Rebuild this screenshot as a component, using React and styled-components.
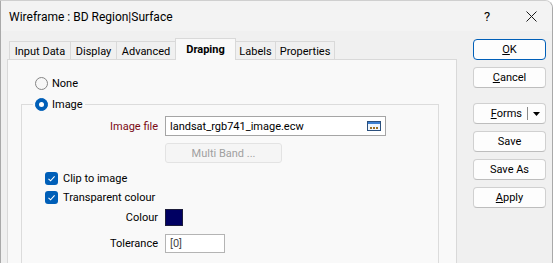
import React from 'react';
import styled, { createGlobalStyle } from 'styled-components';

const GlobalStyle = createGlobalStyle`
  html, body {
    margin: 0;
    padding: 0;
    background: #ffffff;
  }
  body {
    font-family: Roboto, "Liberation Sans", sans-serif;
    font-size: 11px;
    color: #000;
    overflow: hidden;
  }
`;

const Window = styled.div`
  width: 553px;
  height: 263px;
  box-sizing: border-box;
  border-left: 1px solid #a9a9a9;
  border-right: 1px solid #a9a9a9;
  border-top: 1px solid #cfcfcf;
  border-top-right-radius: 8px;
  background: #f0f0f0;
  overflow: hidden;
  display: flex;
  flex-direction: column;
`;

const TitleBar = styled.div`
  height: 30px;
  flex: none;
  display: flex;
  align-items: center;
  background: #f3f3f3;
`;

const TitleText = styled.div`
  flex: 1;
  padding-left: 8px;
  font-size: 12px;
  padding-top: 2px;
`;

const CaptionButton = styled.div`
  width: ${(p) => p.w}px;
  height: 30px;
  display: flex;
  align-items: center;
  justify-content: center;
  font-size: 13px;
`;

const Body = styled.div`
  flex: 1;
  display: flex;
  gap: 16px;
  padding: 7px 0 0 6px;
  min-height: 0;
`;

const LeftColumn = styled.div`
  width: 450px;
  display: flex;
  flex-direction: column;
`;

const TabRow = styled.div`
  height: 21px;
  display: flex;
  align-items: flex-end;
  padding-left: 2px;
  position: relative;
  z-index: 1;
`;

const Tab = styled.div`
  width: ${(p) => p.w}px;
  height: ${(p) => (p.active ? 22 : 18)}px;
  margin-bottom: ${(p) => (p.active ? -1 : 0)}px;
  margin-left: -1px;
  box-sizing: border-box;
  border: 1px solid #d9d9d9;
  border-bottom: none;
  background: ${(p) => (p.active ? '#f9f9f9' : '#f0f0f0')};
  font-weight: ${(p) => (p.active ? 700 : 400)};
  display: flex;
  align-items: center;
  justify-content: center;
  padding-top: ${(p) => (p.active ? 0 : 1)}px;
  &:first-child {
    margin-left: 0;
  }
`;

const Panel = styled.div`
  flex: 1;
  box-sizing: border-box;
  border: 1px solid #d9d9d9;
  border-bottom: none;
  background: #f9f9f9;
  padding-top: 16px;
`;

const RadioRow = styled.label`
  display: flex;
  align-items: center;
  gap: 4px;
  height: 14px;
  margin-left: ${(p) => p.indent || 0}px;
`;

const RadioCircle = styled.span`
  width: 13px;
  height: 13px;
  box-sizing: border-box;
  border-radius: 50%;
  border: 1px solid ${(p) => (p.checked ? '#005fb8' : '#858585')};
  background: ${(p) => (p.checked ? '#005fb8' : '#f7f7f7')};
  display: flex;
  align-items: center;
  justify-content: center;
  &::after {
    content: '';
    width: 5px;
    height: 5px;
    border-radius: 50%;
    background: #ffffff;
    display: ${(p) => (p.checked ? 'block' : 'none')};
  }
`;

const Group = styled.fieldset`
  margin: 7px 17px 0 13px;
  padding: 0 0 40px 0;
  border: 1px solid #dcdcdc;
  min-width: 0;
`;

const Legend = styled.legend`
  margin-left: 11px;
  padding: 0 2px;
`;

const FieldRow = styled.div`
  display: grid;
  grid-template-columns: 136px auto;
  column-gap: 7px;
  align-items: center;
  margin-top: ${(p) => p.top}px;
`;

const FieldLabel = styled.span`
  text-align: right;
  color: ${(p) => p.color || '#000'};
`;

const TextBox = styled.div`
  width: ${(p) => p.w}px;
  height: ${(p) => p.h || 20}px;
  box-sizing: border-box;
  border: 1px solid ${(p) => p.border || '#a5a5a5'};
  background: #ffffff;
  display: flex;
  align-items: center;
  justify-content: space-between;
  padding: 0 4px 0 4px;
  color: ${(p) => p.textColor || '#000'};
`;

const DisabledButton = styled.div`
  width: 117px;
  height: 20px;
  box-sizing: border-box;
  border: 1px solid #e3e3e3;
  border-radius: 3px;
  background: #f5f5f5;
  color: #a0a0a0;
  display: flex;
  align-items: center;
  justify-content: center;
`;

const CheckRow = styled.label`
  display: flex;
  align-items: center;
  gap: 5px;
  height: 19px;
  padding-left: 23px;
  margin-top: ${(p) => p.top || 0}px;
`;

const CheckBox = styled.span`
  width: 13px;
  height: 13px;
  border-radius: 3px;
  background: #005fb8;
  display: flex;
  align-items: center;
  justify-content: center;
`;

const Swatch = styled.div`
  width: 18px;
  height: 17px;
  box-sizing: border-box;
  border: 1px solid #1c1c3a;
  background: ${(p) => p.color};
`;

const ButtonColumn = styled.div`
  width: 73px;
  display: flex;
  flex-direction: column;
  gap: 7px;
  padding-top: 1px;
`;

const Button = styled.div`
  height: 21px;
  box-sizing: border-box;
  border: 1px solid ${(p) => (p.primary ? '#005fb8' : '#d0d0d0')};
  border-bottom-color: ${(p) => (p.primary ? '#005fb8' : '#bdbdbd')};
  border-radius: 4px;
  background: #fdfdfd;
  display: flex;
  align-items: center;
  justify-content: center;
  margin-top: ${(p) => p.top || 0}px;
`;

const SplitButton = styled(Button)`
  justify-content: flex-start;
`;

const SplitMain = styled.span`
  flex: 1;
  text-align: right;
  padding-right: 5px;
`;

const SplitDivider = styled.span`
  width: 1px;
  height: 13px;
  background: #8a8a8a;
`;

const SplitArrow = styled.span`
  width: 17px;
  display: flex;
  align-items: center;
  justify-content: center;
`;

const CloseIcon = () => (
  <svg width="11" height="11" viewBox="0 0 11 11">
    <path d="M0.5 0.5 L10.5 10.5 M10.5 0.5 L0.5 10.5" stroke="#1a1a1a" strokeWidth="1" />
  </svg>
);

const BrowseIcon = () => (
  <svg width="14" height="10" viewBox="0 0 14 10">
    <rect x="0.5" y="0.5" width="13" height="9" fill="#eef5fc" stroke="#2a4f7c" />
    <rect x="1" y="1" width="12" height="2" fill="#3d7fd0" />
    <rect x="3" y="6" width="2" height="2" fill="#9a6d20" />
    <rect x="6" y="6" width="2" height="2" fill="#9a6d20" />
    <rect x="9" y="6" width="2" height="2" fill="#9a6d20" />
  </svg>
);

const CheckMark = () => (
  <svg width="9" height="9" viewBox="0 0 9 9">
    <path d="M1.5 4.8 L3.6 6.8 L7.6 2.4" fill="none" stroke="#ffffff" strokeWidth="1.1" />
  </svg>
);

const DownArrow = () => (
  <svg width="7" height="4" viewBox="0 0 7 4">
    <path d="M0 0 L7 0 L3.5 4 Z" fill="#000" />
  </svg>
);

const tabs = [
  { label: 'Input Data', w: 62 },
  { label: 'Display', w: 47 },
  { label: 'Advanced', w: 60 },
  { label: 'Draping', w: 61, active: true },
  { label: 'Labels', w: 41 },
  { label: 'Properties', w: 60 },
];

export default function App() {
  return (
    <>
      <GlobalStyle />
      <Window>
        <TitleBar>
          <TitleText>Wireframe : BD Region|Surface</TitleText>
          <CaptionButton w={46}>?</CaptionButton>
          <CaptionButton w={42}>
            <CloseIcon />
          </CaptionButton>
        </TitleBar>
        <Body>
          <LeftColumn>
            <TabRow>
              {tabs.map((t) => (
                <Tab key={t.label} w={t.w} active={t.active}>
                  {t.label}
                </Tab>
              ))}
            </TabRow>
            <Panel>
              <RadioRow indent={27}>
                <RadioCircle />
                None
              </RadioRow>
              <Group>
                <Legend>
                  <RadioRow>
                    <RadioCircle checked />
                    Image
                  </RadioRow>
                </Legend>
                <FieldRow top={5}>
                  <FieldLabel color="#7a0a14">Image file</FieldLabel>
                  <TextBox w={221}>
                    <span>landsat_rgb741_image.ecw</span>
                    <BrowseIcon />
                  </TextBox>
                </FieldRow>
                <FieldRow top={7}>
                  <span />
                  <DisabledButton>Multi Band ...</DisabledButton>
                </FieldRow>
                <CheckRow top={6}>
                  <CheckBox>
                    <CheckMark />
                  </CheckBox>
                  Clip to image
                </CheckRow>
                <CheckRow>
                  <CheckBox>
                    <CheckMark />
                  </CheckBox>
                  Transparent colour
                </CheckRow>
                <FieldRow top={2}>
                  <FieldLabel>Colour</FieldLabel>
                  <Swatch color="#000062" />
                </FieldRow>
                <FieldRow top={8}>
                  <FieldLabel>Tolerance</FieldLabel>
                  <TextBox w={60} h={19} border="#b4b4b4" textColor="#4a4a4a">
                    [0]
                  </TextBox>
                </FieldRow>
              </Group>
            </Panel>
          </LeftColumn>
          <ButtonColumn>
            <Button primary>
              <span><u>O</u>K</span>
            </Button>
            <Button>
              <span><u>C</u>ancel</span>
            </Button>
            <SplitButton top={8}>
              <SplitMain><u>F</u>orms</SplitMain>
              <SplitDivider />
              <SplitArrow>
                <DownArrow />
              </SplitArrow>
            </SplitButton>
            <Button>Save</Button>
            <Button>Save As</Button>
            <Button>
              <span><u>A</u>pply</span>
            </Button>
          </ButtonColumn>
        </Body>
      </Window>
    </>
  );
}
